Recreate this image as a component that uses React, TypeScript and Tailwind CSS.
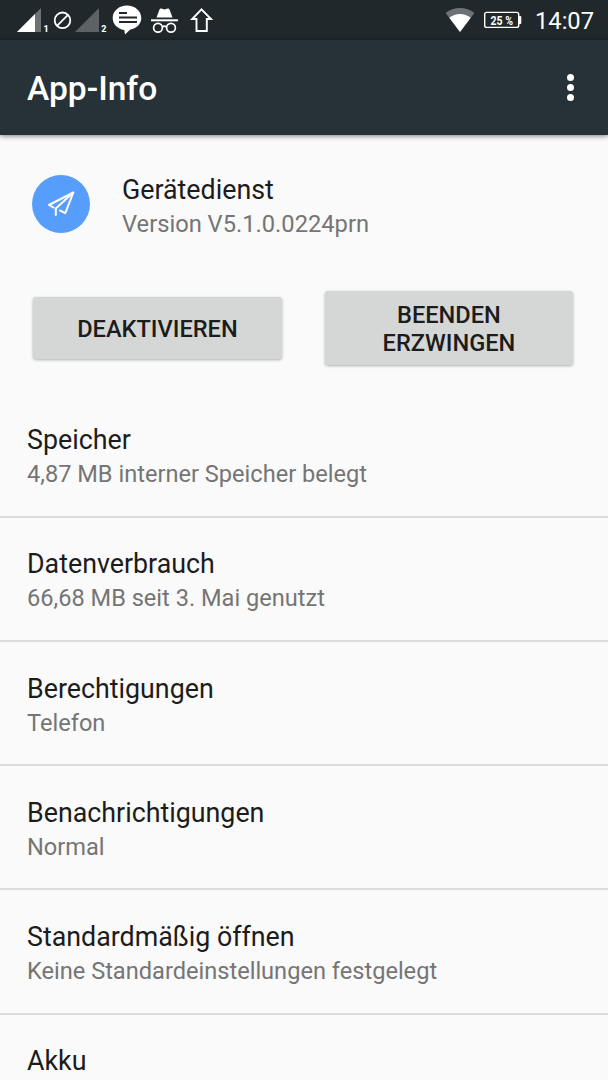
import React from 'react';

const items = [
    { title: 'Speicher', summary: '4,87 MB interner Speicher belegt' },
    { title: 'Datenverbrauch', summary: '66,68 MB seit 3. Mai genutzt' },
    { title: 'Berechtigungen', summary: 'Telefon' },
    { title: 'Benachrichtigungen', summary: 'Normal' },
    { title: 'Standardmäßig öffnen', summary: 'Keine Standardeinstellungen festgelegt' },
    { title: 'Akku', summary: '' },
];

function SignalIcons() {
    return (
        <svg className="w-[92px] h-10 shrink-0" viewBox="16 0 92 40">
            <path d="M17 32 L41 8 V32 Z" fill="#6d7375" />
            <path d="M17 32 L35 14 V32 Z" fill="#fff" />
            <circle cx="62.5" cy="20.3" r="7.8" fill="none" stroke="#fff" strokeWidth="1.8" />
            <path d="M57 25.8 L68 14.8" stroke="#fff" strokeWidth="1.8" />
            <path d="M75 32 L99 8 V32 Z" fill="#5d6365" />
            <text x="43.5" y="31.5" fontSize="9" fontWeight="800" fill="#fff">1</text>
            <text x="101.2" y="31.5" fontSize="9" fontWeight="800" fill="#fff">2</text>
        </svg>
    );
}

function NotificationIcons() {
    return (
        <svg className="w-[108px] h-10 shrink-0" viewBox="108 0 108 40">
            <path d="M127 5.5 C135 5.5 141.3 11 141.3 18 C141.3 24 136.5 28.5 130 29.7 L125 34.5 L124.3 30 C117.5 29 112.7 24 112.7 18 C112.7 11 119 5.5 127 5.5 Z" fill="#fff" />
            <path d="M119 13 H127 M119 17.5 H137 M119 22 H137" stroke="#20282b" strokeWidth="2" />
            <path d="M156.5 17.5 L159.5 9.5 Q160 8.3 161.3 8.6 L164.5 9.5 L167.7 8.6 Q169 8.3 169.5 9.5 L172.5 17.5 Z" fill="#fff" />
            <path d="M151 20.3 H178" stroke="#fff" strokeWidth="2" />
            <g fill="none" stroke="#fff" strokeWidth="1.7">
                <circle cx="158" cy="27.8" r="4.4" />
                <circle cx="171" cy="27.8" r="4.4" />
                <path d="M162.3 27 Q164.5 25.4 166.7 27" />
            </g>
            <path d="M201.5 9.3 L211 19 H206.8 V31 H196.5 V19 H192.2 Z" fill="none" stroke="#fff" strokeWidth="1.9" />
        </svg>
    );
}

function WifiIcon() {
    return (
        <svg className="w-[30px] h-10 shrink-0" viewBox="445 0 30 40">
            <path d="M460 32 L445.6 13 Q452 8 460 8 Q468 8 474.4 13 Z" fill="#6d7375" />
            <path d="M460 32 L449.3 17.8 Q454 14 460 14 Q466 14 470.7 17.8 Z" fill="#fff" />
        </svg>
    );
}

function BatteryIcon() {
    return (
        <svg className="w-10 h-10 shrink-0" viewBox="483 0 40 40">
            <rect x="484.7" y="12.4" width="34" height="15" rx="2" fill="none" stroke="#fff" strokeWidth="1.4" />
            <path d="M519 16 H520.3 Q521.3 16 521.3 17 V23 Q521.3 24 520.3 24 H519 Z" fill="#fff" />
            <text x="490.5" y="24.8" fontSize="12.5" fontWeight="700" fill="#fff" textLength="22.5" lengthAdjust="spacingAndGlyphs">25 %</text>
        </svg>
    );
}

function StatusBar() {
    return (
        <div className="h-10 shrink-0 flex items-center bg-[#20282b] text-white">
            <div className="pl-4 flex flex-1">
                <SignalIcons />
                <NotificationIcons />
            </div>
            <WifiIcon />
            <div className="w-2" />
            <BatteryIcon />
            <div className="w-[85px] pr-[14px] pt-[3px] text-right text-[23.7px] leading-none whitespace-nowrap">14:07</div>
        </div>
    );
}

function AppBar() {
    return (
        <header className="h-[95px] shrink-0 z-10 pl-[27px] pr-[34px] flex items-center justify-between bg-[#263238] text-white shadow-[0_1px_5px_rgba(0,0,0,0.5)]">
            <h1 className="pt-[3px] text-[33.6px] leading-10 font-medium">App-Info</h1>
            <button className="flex flex-col gap-[3px]" aria-label="Weitere Optionen">
                <span className="size-[7px] rounded-full bg-white" />
                <span className="size-[7px] rounded-full bg-white" />
                <span className="size-[7px] rounded-full bg-white" />
            </button>
        </header>
    );
}

function AppHeader() {
    return (
        <div className="h-[139px] shrink-0 pl-8 pt-[40px] flex items-start">
            <svg className="size-[58px] shrink-0" viewBox="0 0 58 58">
                <circle cx="29" cy="29" r="29" fill="#579dfc" />
                <g fill="none" stroke="#fff" strokeWidth="2" strokeLinejoin="round" strokeLinecap="round">
                    <path d="M21.5 32.5 L17 30 L41.3 17.5 L33.3 38.2 L28 35.5" />
                    <path d="M41.3 17.5 L23.8 33.5 V40" />
                </g>
            </svg>
            <div className="pl-8 -mt-[3px]">
                <div className="text-[26.8px] leading-9">Gerätedienst</div>
                <div className="text-[23.7px] leading-8 text-[#757575]">Version V5.1.0.0224prn</div>
            </div>
        </div>
    );
}

function ActionButton({ className, children }: { className: string; children: React.ReactNode }) {
    return (
        <button className={`w-[248.5px] pt-[2px] rounded-[3px] bg-[#d5d7d6] text-[23.6px] leading-7 font-medium shadow-[0_1px_3px_rgba(0,0,0,0.3)] ${className}`}>
            {children}
        </button>
    );
}

function InfoItem({ title, summary }: { title: string; summary: string }) {
    return (
        <div className="h-[124.25px] shrink-0 pl-[27px] pt-[28.8px] border-b-2 border-[#dcdcdc]">
            <div className="text-[26.8px] leading-9">{title}</div>
            <div className="text-[23.6px] leading-8 text-[#757575]">{summary}</div>
        </div>
    );
}

function App() {
    return (
        <div className="w-[608px] h-[1080px] flex flex-col overflow-hidden bg-[#fafafa] text-[#1c1c1c] font-[Roboto,sans-serif]">
            <StatusBar />
            <AppBar />
            <AppHeader />
            <div className="h-[119.3px] shrink-0 pl-[33.2px] pt-[17px] flex items-start gap-[43px]">
                <ActionButton className="mt-[6px] h-[62px]">DEAKTIVIEREN</ActionButton>
                <ActionButton className="h-[74px]">BEENDEN<br />ERZWINGEN</ActionButton>
            </div>
            {items.map(item => <InfoItem key={item.title} {...item} />)}
        </div>
    );
}

export default App;
